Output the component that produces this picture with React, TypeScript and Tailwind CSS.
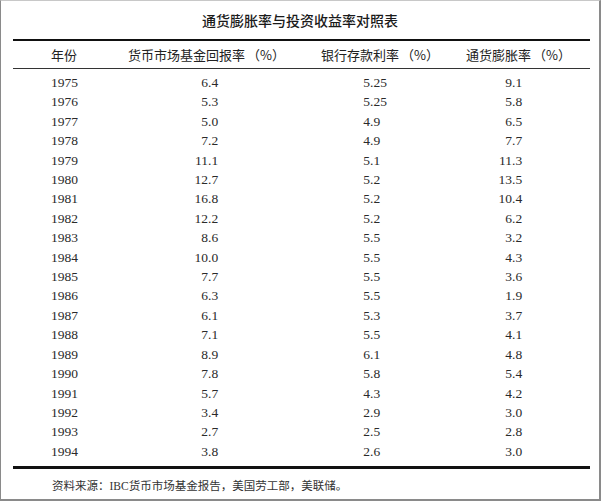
import React from "react";

const rows: [string, string, string, string][] = [
  ["1975", "6.4", "5.25", "9.1"],
  ["1976", "5.3", "5.25", "5.8"],
  ["1977", "5.0", "4.9", "6.5"],
  ["1978", "7.2", "4.9", "7.7"],
  ["1979", "11.1", "5.1", "11.3"],
  ["1980", "12.7", "5.2", "13.5"],
  ["1981", "16.8", "5.2", "10.4"],
  ["1982", "12.2", "5.2", "6.2"],
  ["1983", "8.6", "5.5", "3.2"],
  ["1984", "10.0", "5.5", "4.3"],
  ["1985", "7.7", "5.5", "3.6"],
  ["1986", "6.3", "5.5", "1.9"],
  ["1987", "6.1", "5.3", "3.7"],
  ["1988", "7.1", "5.5", "4.1"],
  ["1989", "8.9", "6.1", "4.8"],
  ["1990", "7.8", "5.8", "5.4"],
  ["1991", "5.7", "4.3", "4.2"],
  ["1992", "3.4", "2.9", "3.0"],
  ["1993", "2.7", "2.5", "2.8"],
  ["1994", "3.8", "2.6", "3.0"],
];

// number aligned on its decimal point
function Num({ v, w }: { v: string; w: string }) {
  const [int, frac] = v.split(".");
  return (
    <div className="flex">
      <span className={`${w} text-right`}>{int}</span>
      <span>.{frac}</span>
    </div>
  );
}

const cjk = "font-['Noto_Sans_CJK_SC','Noto_Sans',sans-serif]";
const serif = "font-['Liberation_Serif',serif]";

function Head({ label }: { label: string }) {
  return (
    <>
      {label}
      <span className="ml-[2px]">（%）</span>
    </>
  );
}

export default function App() {
  return (
    <div className="w-[602px] h-[502px] bg-white">
      <div className="w-[601px] h-[501px] border border-t-[#c8c8c8] border-l-[#8a8a8a] border-r-2 border-r-[#8a8a8a] border-b-2 border-b-[#8a8a8a] flex flex-col">
        <div className={`${cjk} shrink-0 h-[38px] flex items-center justify-center text-[14px] font-medium text-[#1a1a1a]`}>
          通货膨胀率与投资收益率对照表
        </div>
        <div className="shrink-0 mx-[12px] w-[577px]">
          <div className="h-[2px] bg-[#111]" />
          <div className={`${cjk} grid grid-cols-[97px_190px_145px_145px] h-[27px] items-center text-[13px] text-[#222]`}>
            <div className="pl-[38px]">年份</div>
            <div className="pl-[18px]"><Head label="货币市场基金回报率" /></div>
            <div className="pl-[21px]"><Head label="银行存款利率" /></div>
            <div className="pl-[21px]"><Head label="通货膨胀率" /></div>
          </div>
          <div className="h-[1px] bg-[#333]" />
          <div className={`${serif} pt-[4px] pb-[5px] text-[13.5px] text-[#2a2a2a]`}>
            {rows.map((r) => (
              <div key={r[0]} className="grid grid-cols-[97px_190px_145px_145px] h-[19.42px] items-center">
                <div className="pl-[38px]">{r[0]}</div>
                <Num v={r[1]} w="w-[98px]" />
                <Num v={r[2]} w="w-[70px]" />
                <Num v={r[3]} w="w-[67px]" />
              </div>
            ))}
          </div>
          <div className="h-[2.5px] bg-[#111]" />
        </div>
        <div className={`font-['Liberation_Serif','Noto_Sans_CJK_SC',serif] shrink-0 h-[30px] flex items-center pl-[51px] pt-[5px] text-[11.5px] text-[#333]`}>
          资料来源：IBC货币市场基金报告，美国劳工部，美联储。
        </div>
      </div>
    </div>
  );
}
